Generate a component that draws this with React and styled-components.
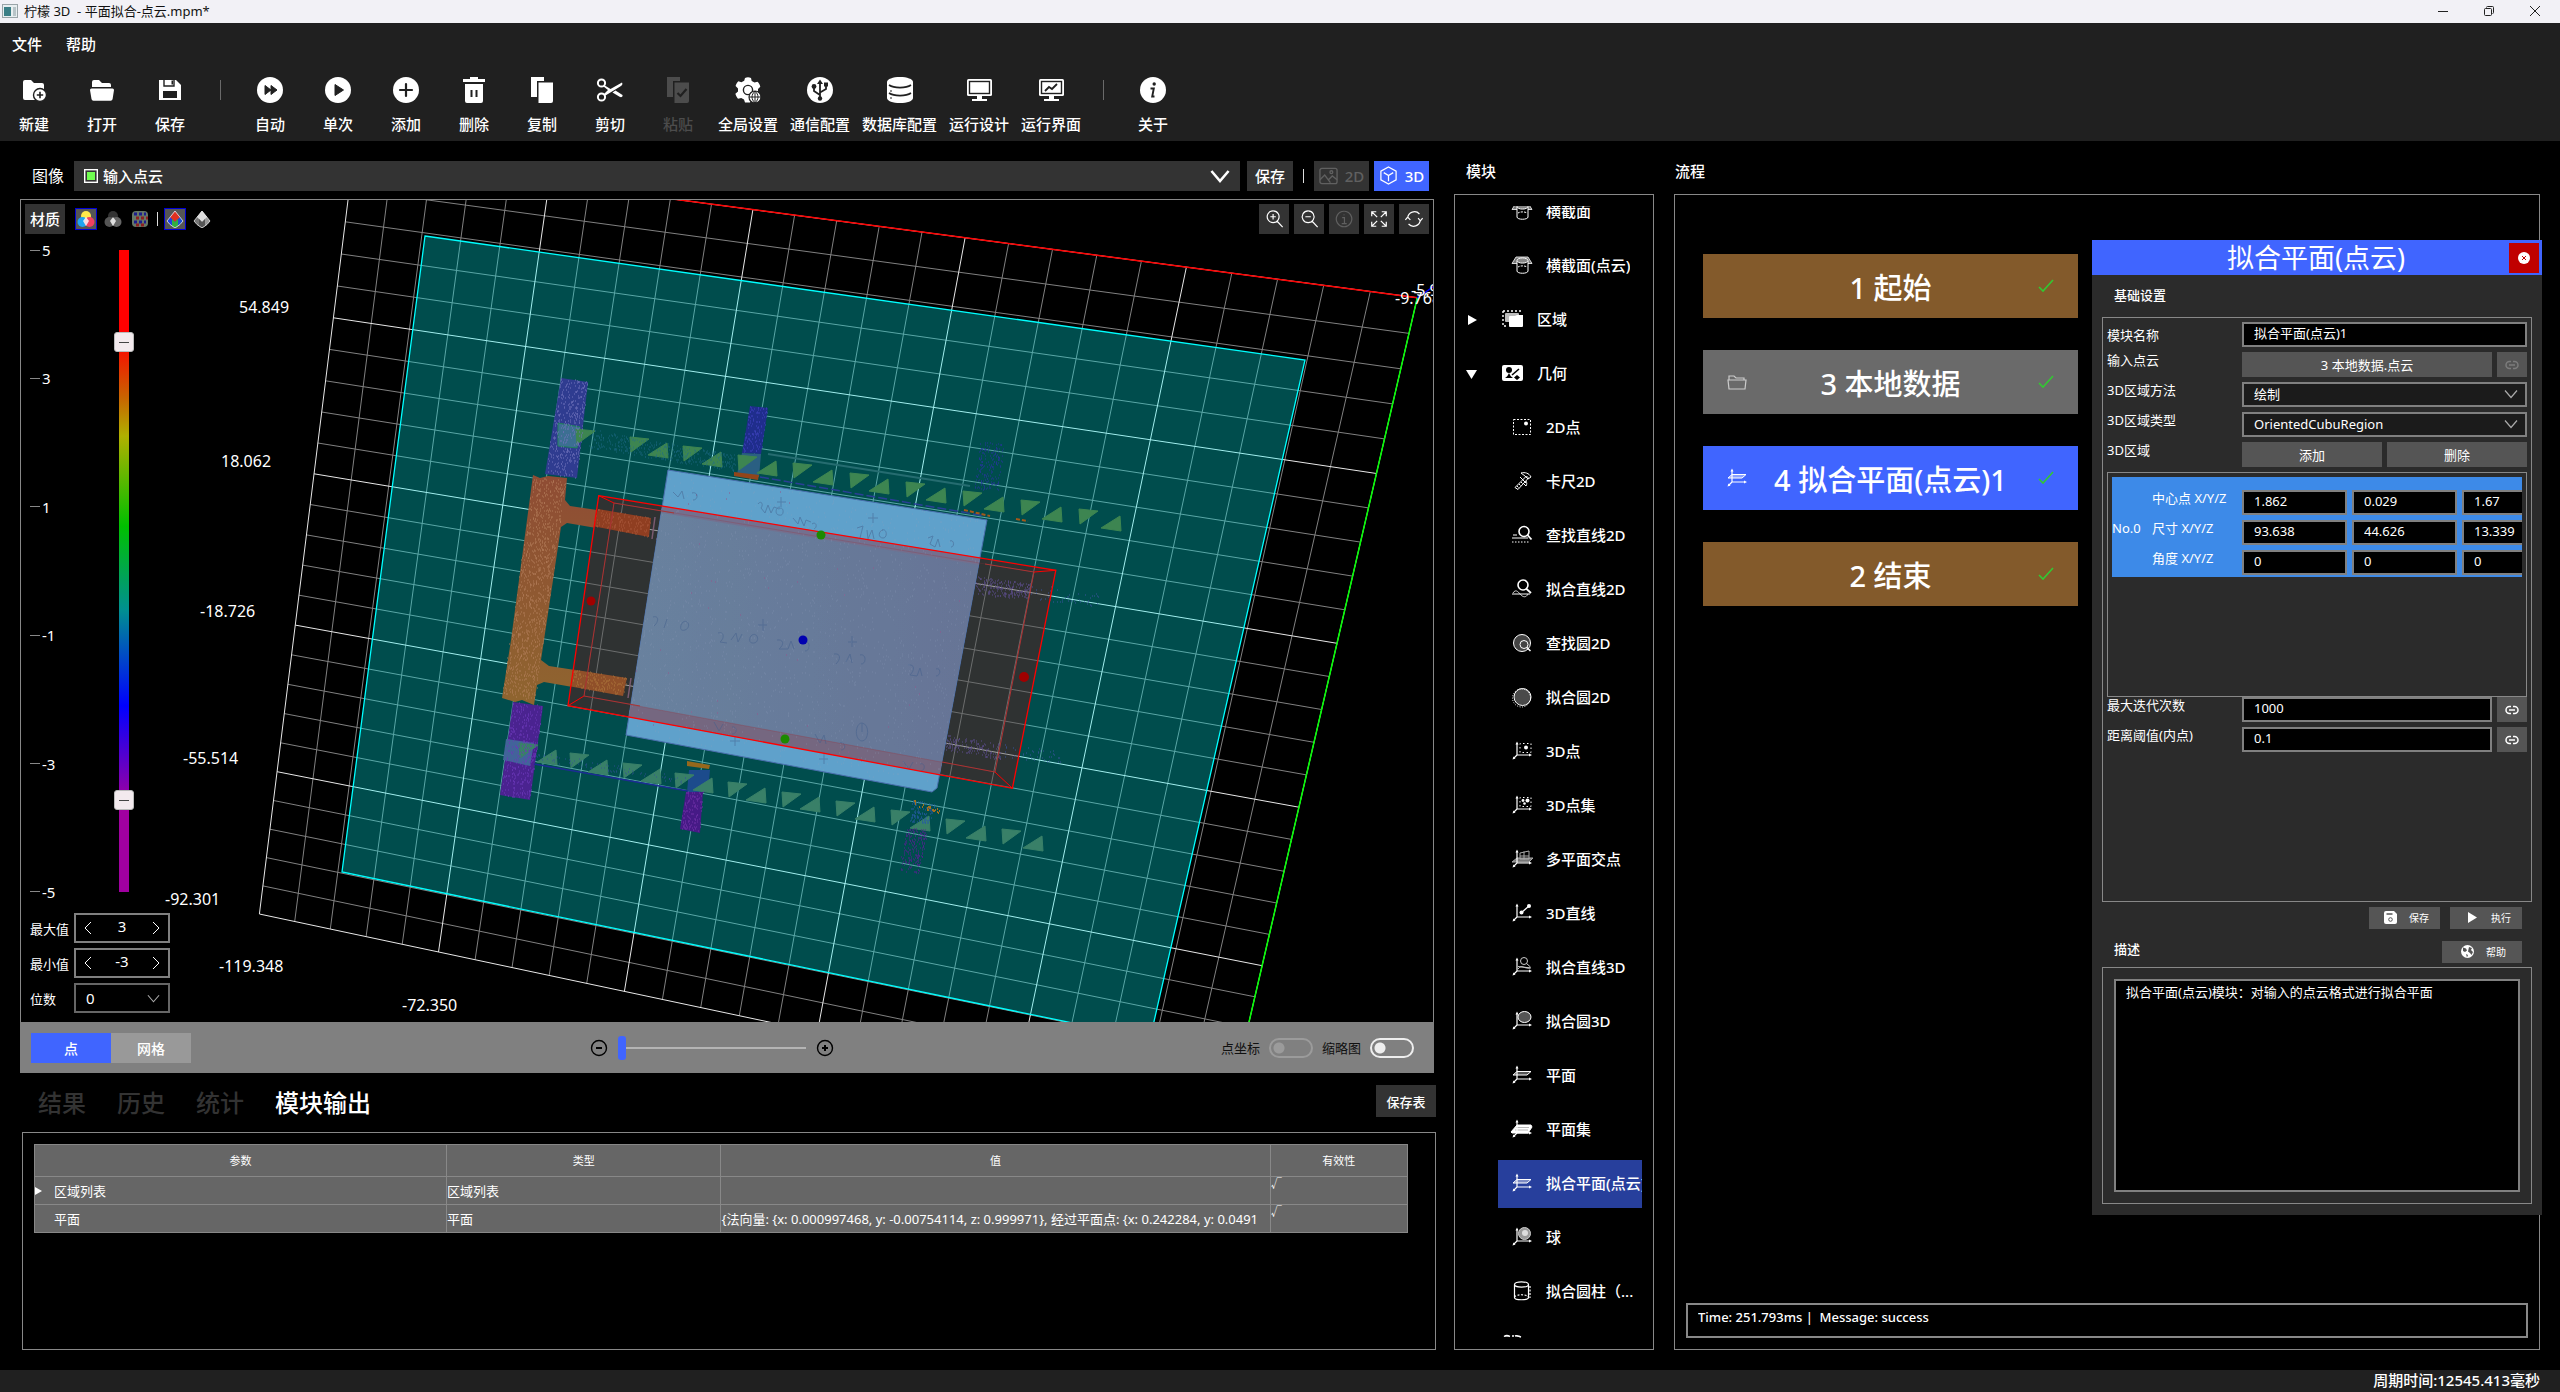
import { useLayoutEffect, useRef } from "react";
import styled, { createGlobalStyle, css } from "styled-components";

const GlobalStyle = createGlobalStyle`
  * {
    box-sizing: border-box;
  }
  body {
    margin: 0;
    background: #000;
    color: #fff;
    font-family: "Noto Sans", "Noto Sans CJK SC", sans-serif;
    font-size: 15px;
  }
  button, input, select, textarea {
    font: inherit;
    color: inherit;
    margin: 0;
    padding: 0;
    border: 0;
    border-radius: 0;
    outline: none;
  }
  svg {
    display: block;
    flex-shrink: 0;
  }
`;

/* ---------- toolbar icons ---------- */

const DARK = "#202020";

const toolbarIcons = {
  create: (
    <>
      <path d="M2 5a2 2 0 0 1 2-2h6l3 3h8a2 2 0 0 1 2 2v15H4a2 2 0 0 1-2-2z" fill="#fff" />
      <circle cx="19" cy="18" r="6.5" fill="#fff" stroke={DARK} strokeWidth="1.4" />
      <path d="M19 14.8v6.4M15.8 18h6.4" stroke={DARK} strokeWidth="1.6" />
    </>
  ),
  open: (
    <>
      <path d="M3 10V5a2 2 0 0 1 2-2h5l3 3h7a2 2 0 0 1 2 2v2z" fill="#fff" />
      <path d="M1 13a1.5 1.5 0 0 1 1.5-1.5h21A1.5 1.5 0 0 1 25 13l-1.4 9a2 2 0 0 1-2 1.7H4.500a2 2 0 0 1-2-1.700z" fill="#fff" />
    </>
  ),
  save: (
    <>
      <path d="M2 3h17l5 5v15H2z" fill="#fff" />
      <path d="M7 3v6h10V3" fill="none" stroke={DARK} strokeWidth="1.4" />
      <path d="M14.500 3.500h1.500v4h-1.500zM6 14h14v7H6z" fill={DARK} />
    </>
  ),
  auto: (
    <>
      <circle cx="13" cy="13" r="13" fill="#fff" />
      <path d="M8 8.500l6 4.500-6 4.500zM14 8.500l6 4.500-6 4.500z" fill={DARK} stroke={DARK} strokeLinejoin="round" />
    </>
  ),
  once: (
    <>
      <circle cx="13" cy="13" r="13" fill="#fff" />
      <path d="M10 7.500l8.500 5.500-8.500 5.500z" fill={DARK} stroke={DARK} strokeLinejoin="round" />
    </>
  ),
  add: (
    <>
      <circle cx="13" cy="13" r="13" fill="#fff" />
      <path d="M13 7v12M7 13h12" stroke={DARK} strokeWidth="2.2" strokeLinecap="round" />
    </>
  ),
  remove: (
    <>
      <path d="M2 2h7V0h8v2h7v3H2zM4 7h18v17a2 2 0 0 1-2 2H6a2 2 0 0 1-2-2z" fill="#fff" />
      <path d="M10.500 13v7M15.500 13v7" stroke={DARK} strokeWidth="2" />
    </>
  ),
  copy: (
    <>
      <path d="M2 0h13v4H8v16H2z" fill="#fff" />
      <path d="M9.500 5.500H24V24a2 2 0 0 1-2 2H9.500z" fill="#fff" />
    </>
  ),
  cut: (
    <>
      <circle cx="4.500" cy="6" r="3.600" fill="none" stroke="#fff" strokeWidth="2" />
      <circle cx="4.500" cy="20" r="3.600" fill="none" stroke="#fff" strokeWidth="2" />
      <path d="M7 8l6.500 4L25 5.500c.8 1.500.3 2.600-1 3.500L8.500 18.500 7 17l4-4-4.500-3.500z" fill="#fff" />
      <path d="M15.500 15.500l3-2 7 4.500c.5 1.500-.8 2.500-2.500 2z" fill="#fff" />
    </>
  ),
  paste: (
    <>
      <path d="M2 0h13v4H8v16H2z" fill="#4c4c4c" />
      <path d="M9.500 5.500H24V24a2 2 0 0 1-2 2H9.500z" fill="#4c4c4c" />
      <path d="M12.500 16l3 3 6-7" fill="none" stroke={DARK} strokeWidth="2.200" />
    </>
  ),
  settings: (
    <>
      <path
        d="M10 1c2-1 4-1 6 0l.7 3 2.800 1.600 3-.8c1.400 1.400 2.400 3 2.800 5L23 12v3l2 2-3 5-3-.5L16 23.500l-1 2h-5l-1-3-2.800-1.600-3.200.8c-1.300-1.500-2.200-3.200-2.600-5L3 14.500v-3L.6 9C1 7.200 2 5.700 3.400 4.300l3 .9L9.200 3.700z"
        fill="#fff"
      />
      <circle cx="13" cy="13" r="4.600" fill="#fff" stroke={DARK} strokeWidth="1.400" />
      <circle cx="20" cy="20" r="6" fill="#fff" stroke={DARK} strokeWidth="1.200" />
      <path d="M14 20h12M20 14v12M20 14c-4 4-4 8 0 12c4-4 4-8 0-12" fill="none" stroke={DARK} />
    </>
  ),
  comm: (
    <>
      <circle cx="13" cy="13" r="13" fill="#fff" />
      <path d="M13 5v16M13 18l-6-4v-4M13 15.500l6-3.500V8" fill="none" stroke={DARK} strokeWidth="1.800" />
      <path d="M13 2.500l3 4.500h-6zM17 5.500h4v4h-4z" fill={DARK} />
      <circle cx="7" cy="9.500" r="2.400" fill={DARK} />
      <circle cx="13" cy="21.500" r="2.200" fill={DARK} />
    </>
  ),
  database: (
    <>
      <path d="M0 5c0-3 6-5 13-5s13 2 13 5v16c0 3-6 5-13 5S0 24 0 21z" fill="#fff" />
      <path d="M2 8c5 3.500 17 3.500 22 0M2 16c5 3.500 17 3.500 22 0" fill="none" stroke={DARK} strokeWidth="1.600" />
      <path d="M3 14h2M3 21h2" stroke={DARK} />
    </>
  ),
  design: (
    <>
      <rect x="1" y="2" width="25" height="17" rx="1.500" fill="#fff" />
      <rect x="3.500" y="4.500" width="20" height="12" fill="#fff" stroke={DARK} strokeWidth="1.400" />
      <path d="M11 19h5v3h5v2H6v-2h5z" fill="#fff" />
    </>
  ),
  screen: (
    <>
      <rect x="1" y="2" width="25" height="17" rx="1.500" fill="#fff" />
      <rect x="3.500" y="4.500" width="20" height="12" fill="#fff" stroke={DARK} strokeWidth="1.400" />
      <path d="M7 14l4-4 3 2 5-5" fill="none" stroke={DARK} strokeWidth="1.800" />
      <path d="M11 19h5v3h5v2H6v-2h5z" fill="#fff" />
    </>
  ),
  about: (
    <>
      <circle cx="13" cy="13" r="13" fill="#fff" />
      <circle cx="14.200" cy="7" r="1.700" fill={DARK} />
      <path d="M10.500 11.500h3.300l-1.600 8h2.300" fill="none" stroke={DARK} strokeWidth="1.900" />
    </>
  ),
};

const TOOLS = [
  ["create", "新建"],
  ["open", "打开"],
  ["save", "保存"],
  null,
  ["auto", "自动"],
  ["once", "单次"],
  ["add", "添加"],
  ["remove", "删除"],
  ["copy", "复制"],
  ["cut", "剪切"],
  ["paste", "粘贴"],
  ["settings", "全局设置"],
  ["comm", "通信配置"],
  ["database", "数据库配置"],
  ["design", "运行设计"],
  ["screen", "运行界面"],
  null,
  ["about", "关于"],
];

/* ---------- module icons ---------- */

const Axes = () => (
  <g stroke="#fff" fill="#fff">
    <path d="M5 2.500V14H18M5 14l-3.500 3.500" fill="none" strokeWidth="1.200" />
    <path d="M5 .5l1.500 3h-3zM20 14l-3 1.500v-3zM.5 18.500l1-3 2 2z" stroke="none" />
  </g>
);

const moduleIcons = {
  section: (
    <g fill="none" stroke="#fff">
      <path d="M0 8.500L4 2h12l4 6.500z" fill="#777" strokeWidth=".8" />
      <path d="M5 6v10c0 3 11 3 11 0V6" fill="#000" />
      <ellipse cx="10.500" cy="5.500" rx="5.500" ry="2.600" fill="#888" />
      <path d="M6 12c2-1.500 7-1.500 9 0" strokeDasharray="2 1" />
    </g>
  ),
  region: (
    <g>
      <path d="M1 2h18M1 2v15h5" fill="none" stroke="#fff" strokeWidth="1.400" strokeDasharray="2 2" />
      <rect x="3" y="4" width="14" height="9" rx="1" fill="#bbb" />
      <path d="M7 8a1 1 0 0 1 1-1h5l2-1h6v11a1 1 0 0 1-1 1H8a1 1 0 0 1-1-1z" fill="#fff" />
    </g>
  ),
  geometry: (
    <g>
      <rect x="0" y="2" width="21" height="16" rx="2" fill="#fff" />
      <circle cx="7" cy="7" r="3" fill="#000" />
      <path d="M3 15c2-1 3-3 4-5 1 2 2 4 4 5zM15 12l3 2.500-3 2.500-3-2.500z" fill="#000" />
      <path d="M10 12l7-6" stroke="#000" strokeWidth="1.600" />
    </g>
  ),
  point2d: (
    <g>
      <rect x="1.500" y="2.500" width="17" height="15" fill="none" stroke="#fff" strokeDasharray="2 1.500" />
      <circle cx="14" cy="6.500" r="2" fill="#fff" />
    </g>
  ),
  caliper: (
    <g fill="none" stroke="#fff">
      <path d="M3 16.500L14.500 5l2 2L6 18.500zM9 2c4-1 8 0 10 4l-3 2-3-3zM8 6l6 6M11 12l3 3c1-2 1-3 0-5" />
      <path d="M5 15l1.500 1.500M7 13l1.500 1.500M9 11l1.500 1.500" />
    </g>
  ),
  findLine: (
    <g fill="none" stroke="#fff">
      <circle cx="12" cy="6.500" r="5" strokeWidth="1.600" />
      <path d="M15.500 10l4 4.500" strokeWidth="1.800" />
      <path d="M1 10h4M0 13h16" />
      <path d="M0 17h17" strokeDasharray="1.500 1.500" />
    </g>
  ),
  fitLine: (
    <g fill="none" stroke="#fff">
      <circle cx="11" cy="6" r="5" strokeWidth="1.600" />
      <path d="M14 9.500l5 4.500" strokeWidth="1.800" />
      <path d="M0 15h18" />
      <path d="M1 14c3-5 6 0 8 2s5 3 7-1" strokeWidth=".8" />
    </g>
  ),
  findCircle: (
    <g fill="none" stroke="#fff">
      <circle cx="10" cy="10" r="8.500" fill="#444" />
      <circle cx="12" cy="11.500" r="4" />
      <path d="M15 14.500l3.500 3.500" strokeWidth="1.500" />
    </g>
  ),
  fitCircle: (
    <g fill="none" stroke="#fff">
      <circle cx="10.500" cy="10" r="8.500" fill="#4a4a4a" />
      <circle cx="9.500" cy="11" r="9" strokeDasharray="1 1.500" />
    </g>
  ),
  point3d: (
    <g>
      <Axes />
      <path d="M8 11.500V2.500h11v9z" fill="none" stroke="#fff" strokeDasharray="1.500 2.500" />
      <circle cx="14" cy="6.500" r="2" fill="#fff" />
    </g>
  ),
  points3d: (
    <g>
      <Axes />
      <path d="M8 11.500V2.500h11v9z" fill="none" stroke="#fff" strokeDasharray="1.500 2.500" />
      <circle cx="11" cy="5.500" r="1.400" fill="#fff" />
      <circle cx="15.500" cy="5.500" r="2" fill="#fff" />
      <circle cx="12.500" cy="8.500" r="1.300" fill="#fff" />
    </g>
  ),
  planes: (
    <g>
      <path d="M0 13l5-4h16l-4 4z" fill="#777" stroke="#aaa" />
      <path d="M8 4l9-2v8H8zM8 7h9M12 2.500v8" fill="none" stroke="#aaa" />
      <Axes />
    </g>
  ),
  line3d: (
    <g>
      <Axes />
      <path d="M9 10l8-7" stroke="#fff" strokeWidth="1.300" />
      <circle cx="9.500" cy="9.500" r="2" fill="#fff" />
      <circle cx="17" cy="3" r="2" fill="#fff" />
    </g>
  ),
  fitLine3d: (
    <g>
      <Axes />
      <g fill="none" stroke="#ccc">
        <circle cx="12" cy="4" r="3.500" />
        <path d="M14.500 6.500l4 3.500M6 9.500l13 1.500M6 12c4-5 6 0 12-1" />
      </g>
    </g>
  ),
  fitCircle3d: (
    <g>
      <Axes />
      <ellipse cx="12.500" cy="6" rx="6.500" ry="5.500" fill="#555" stroke="#fff" />
    </g>
  ),
  plane: (
    <g>
      <path d="M1 10l4-3.500h14l-4 3.500z" fill="#555" stroke="#fff" />
      <Axes />
    </g>
  ),
  fitPlane: (
    <g>
      <path d="M1 10l4-3.500h14l-4 3.500z" fill="#fff" fillOpacity=".4" stroke="#fff" />
      <Axes />
    </g>
  ),
  planeSet: (
    <g>
      <path d="M-1 13l6-7h14l1 2-4 6H0z" fill="#fff" stroke="#fff" />
      <path d="M4 8.500h13M3 11h13" stroke="#888" strokeWidth=".6" />
      <Axes />
    </g>
  ),
  sphere: (
    <g>
      <Axes />
      <circle cx="12.500" cy="6.500" r="6" fill="#999" stroke="#ccc" />
      <circle cx="13" cy="6" r="3" fill="#ddd" />
    </g>
  ),
  cylinder: (
    <g fill="none" stroke="#fff" strokeWidth="1.200">
      <ellipse cx="9.500" cy="3.500" rx="7" ry="2.600" />
      <path d="M2.500 3.500v13c0 3 14 3 14 0v-13" />
      <path d="M2.500 16c2-3 12-3 14 0M18 5v12" strokeDasharray="2 1.500" />
    </g>
  ),
  more: <path d="M2 1.500c3-2 4-1 6 0M10 1h2M13 1c2-1 3 0 6 1M5 4h11v12H5z" fill="#fff" stroke="#fff" strokeWidth="1.500" />,
};

const MODULES = [
  { icon: "section", name: "横截面" },
  { icon: "section", name: "横截面(点云)" },
  { icon: "region", name: "区域", group: "closed" },
  { icon: "geometry", name: "几何", group: "open" },
  { icon: "point2d", name: "2D点" },
  { icon: "caliper", name: "卡尺2D" },
  { icon: "findLine", name: "查找直线2D" },
  { icon: "fitLine", name: "拟合直线2D" },
  { icon: "findCircle", name: "查找圆2D" },
  { icon: "fitCircle", name: "拟合圆2D" },
  { icon: "point3d", name: "3D点" },
  { icon: "points3d", name: "3D点集" },
  { icon: "planes", name: "多平面交点" },
  { icon: "line3d", name: "3D直线" },
  { icon: "fitLine3d", name: "拟合直线3D" },
  { icon: "fitCircle3d", name: "拟合圆3D" },
  { icon: "plane", name: "平面" },
  { icon: "planeSet", name: "平面集" },
  { icon: "fitPlane", name: "拟合平面(点云)", active: true },
  { icon: "sphere", name: "球" },
  { icon: "cylinder", name: "拟合圆柱（..." },
  { icon: "more", name: "", group: "last" },
];

/* ---------- point cloud scene ---------- */

// corners of the 25 x 25 ground grid on screen
const CORNERS = [
  [259.4, 914],
  [1226.5, 1119],
  [1417.3, 297.7],
  [353.4, 156.7],
];
const CELLS = 25;

function project(u, v) {
  const [p0, p1, p2, p3] = CORNERS;
  const sx = p0[0] - p1[0] + p2[0] - p3[0];
  const sy = p0[1] - p1[1] + p2[1] - p3[1];
  const dx1 = p1[0] - p2[0];
  const dy1 = p1[1] - p2[1];
  const dx2 = p3[0] - p2[0];
  const dy2 = p3[1] - p2[1];
  const den = dx1 * dy2 - dx2 * dy1;
  const g = (sx * dy2 - dx2 * sy) / den;
  const h = (dx1 * sy - sx * dy1) / den;
  const w = g * u + h * v + 1;
  const x = ((p1[0] - p0[0] + g * p1[0]) * u + (p3[0] - p0[0] + h * p3[0]) * v + p0[0]) / w;
  const y = ((p1[1] - p0[1] + g * p1[1]) * u + (p3[1] - p0[1] + h * p3[1]) * v + p0[1]) / w;
  return `${x.toFixed(1)} ${y.toFixed(1)}`;
}

function gridPath(major) {
  let d = "";
  for (let i = 0; i <= CELLS; i++) {
    if ((i % 5 === 0) !== major) continue;
    const t = i / CELLS;
    d += `M${project(t, 0)}L${project(t, 1)}M${project(0, t)}L${project(1, t)}`;
  }
  return d;
}

const MINOR = gridPath(false);
const MAJOR = gridPath(true);

// random specks inside a quad given as tl, tr, br, bl
function specks(quad, count, seed) {
  let s = seed;
  const rnd = () => {
    s = (s * 16807) % 2147483647;
    return s / 2147483647;
  };
  let d = "";
  for (let i = 0; i < count; i++) {
    const u = rnd();
    const v = rnd();
    const x = (quad[0] * (1 - u) + quad[2] * u) * (1 - v) + (quad[6] * (1 - u) + quad[4] * u) * v;
    const y = (quad[1] * (1 - u) + quad[3] * u) * (1 - v) + (quad[7] * (1 - u) + quad[5] * u) * v;
    d += `M${x.toFixed(0)} ${y.toFixed(0)}h1`;
  }
  return d;
}

const down = (points) => points.map(([x, y]) => `M${x} ${y}l19 2l-18 13z`).join("");
const up = (points) => points.map(([x, y]) => `M${x} ${y}l1 15l-20 -3z`).join("");

const TOP_DOWN = [[576, 429], [630, 437], [683, 446], [738, 455], [793, 463], [850, 473], [906, 482], [963, 491], [1021, 500], [1079, 509]];
const TOP_UP = [[667, 443], [721, 452], [776, 461], [832, 470], [888, 479], [945, 488], [1003, 497], [1061, 507], [1120, 516]];
const LOW_DOWN = [[519, 743], [570, 753], [623, 763], [675, 773], [728, 782], [782, 792], [836, 801], [891, 810], [946, 819], [1002, 829]];
const LOW_UP = [[556, 750], [607, 760], [660, 769], [712, 778], [765, 788], [819, 797], [874, 807], [929, 816], [985, 826], [1042, 836]];

const LABELS = [
  [239, 313, "54.849"],
  [221, 467, "18.062"],
  [200, 617, "-18.726"],
  [183, 764, "-55.514"],
  [165, 905, "-92.301"],
  [219, 972, "-119.348"],
  [402, 1011, "-72.350"],
  [1395, 304, "-9.768"],
  [1411, 296, "-5.98"],
];

const BOARD = "668,470 987,520 937,788 932,792 626,735";
const BOX = "598.7,495.7 1055.8,570.3 1012.4,788.3 568,705.7";

function Scene() {
  return (
    <SceneSvg viewBox="21 200 1412 822" preserveAspectRatio="xMinYMin slice" aria-hidden="true">
      <defs>
        <clipPath id="box">
          <polygon points={BOX} />
        </clipPath>
        <clipPath id="board">
          <polygon points={BOARD} />
        </clipPath>
        <linearGradient id="copper" x1="0" y1="0" x2="0" y2="1">
          <stop offset="0" stopColor="#8f4c34" />
          <stop offset="1" stopColor="#8f652f" />
        </linearGradient>
        <linearGradient id="steel" x1="0" y1="0" x2="1" y2="0">
          <stop offset="0" stopColor="#6a84a0" />
          <stop offset="1" stopColor="#667294" />
        </linearGradient>
      </defs>
      <path d={MINOR} stroke="#808080" fill="none" />
      <path d={MAJOR} stroke="#e8e8e8" fill="none" />
      <path d="M353.400 156.700L1417.300 297.700" stroke="#f00" strokeWidth="1.500" />
      <path d="M1417.300 297.700L1226.500 1119" stroke="#0f0" strokeWidth="1.500" />
      <path d="M1417 298l20-14" stroke="#00f" strokeWidth="1.500" />

      <polygon points="425,236 1305,360 1150,1039 342,872" fill="rgba(0,255,255,.3)" stroke="#0ff" strokeWidth="1.300" />

      <polygon points="561,378 588,382 577,478 545,474" fill="#2f3c90" />
      <polygon points="558,423 580,427 577,448 558,446" fill="#3c6f92" stroke="#20805c" />
      <polygon points="750,406 768,408 761,454 742,453" fill="#1f2d8c" />
      <polygon points="742,453 761,454 759,477 737,474" fill="#2a5f82" />
      <polygon points="734,472 759,475 758,480 734,476" fill="#92451a" />
      <polygon points="513,702 543,706 530,800 500,795" fill="#4a2390" />
      <polygon points="506,739 534,743 530,766 503,760" fill="#42639a" />
      <polygon points="689,770 710,770 708,792 687,792" fill="#1c4b8c" />
      <polygon points="687,761 710,765 709,769 687,766" fill="#96681c" />
      <polygon points="686,792 703,792 700,833 680,829" fill="#461a86" />
      <path d="M534 764L688 791" stroke="#1c2c94" strokeWidth="1.500" />
      <path d="M760 477L985 516" stroke="#2a3f96" strokeDasharray="9 3" strokeWidth="1.500" />
      <path d="M768 454L970 486" stroke="#256c70" strokeWidth="2" />
      <path d="M964 510l26 6M1016 519l12 2" stroke="#a3591a" strokeWidth="2" strokeDasharray="4 2" />
      <path d={down(TOP_DOWN) + up(TOP_UP)} fill="#3d8551" stroke="#3d8551" strokeLinejoin="round" />
      <path d={down(LOW_DOWN) + up(LOW_UP)} fill="#398068" stroke="#398068" strokeLinejoin="round" />
      <path d={specks([561, 378, 588, 382, 577, 478, 545, 474], 380, 11)} stroke="#7173bb" />
      <path d={specks([750, 406, 768, 408, 761, 454, 742, 453], 130, 17)} stroke="#3f42bd" />
      <path d={specks([513, 702, 543, 706, 530, 800, 500, 795], 380, 23)} stroke="#6a38b8" />
      <path d={specks([686, 792, 703, 792, 700, 833, 680, 829], 130, 29)} stroke="#7130a8" />
      <path d={specks([592, 430, 740, 456, 734, 472, 588, 448], 420, 31)} stroke="#206d8c" opacity=".7" />
      <path d={specks([980, 442, 1004, 444, 998, 490, 974, 490], 190, 37)} stroke="#26359c" />
      <path d={specks([912, 800, 936, 805, 928, 824, 910, 822], 120, 41)} stroke="#275aa5" />
      <path d={specks([907, 828, 928, 830, 919, 874, 898, 872], 190, 43)} stroke="#5b1c96" />
      <path d={specks([914, 800, 940, 810, 940, 814, 914, 806], 30, 47)} stroke="#a4701c" strokeWidth="2" />
      <path d={specks([537, 752, 690, 778, 688, 785, 535, 760], 90, 53)} stroke="#35509c" opacity=".8" />

      <path
        d="M533 475l7 3 8-2 19 2-2 22 5 6 81 12-2 19-82-14-6 4-17 113-3 20 8 6 78 12-3 18-80-14-7 3-3 20-12-5-7 2-13-4 9-58z"
        fill="url(#copper)"
      />
      <path d={specks([533, 478, 566, 480, 535, 700, 502, 696], 1100, 59)} stroke="#b98360" opacity=".8" />

      <g clipPath="url(#box)">
        <rect x="560" y="480" width="500" height="320" fill="#2f3232" />
        <path d={MINOR} stroke="#6c6e6e" fill="none" />
        <path d={MAJOR} stroke="#a0a0a0" fill="none" />
        <polygon points="598,509 651,518 649,537 592,526" fill="#8f3f22" />
        <polygon points="570,669 627,678 623,696 568,686" fill="#90502a" />
        <path d={specks([596, 509, 651, 518, 649, 537, 592, 526], 160, 61)} stroke="#b06040" opacity=".7" />
        <path d={specks([570, 669, 627, 678, 623, 696, 568, 686], 160, 67)} stroke="#b58040" opacity=".7" />
        <path d={specks([977, 577, 1030, 584, 1030, 600, 975, 595], 230, 71)} stroke="#5d4c8c" />
        <path d={specks([947, 735, 1000, 744, 1000, 760, 945, 750], 160, 73)} stroke="#5d4c8c" />
      </g>
      <path d={specks([1030, 584, 1100, 594, 1098, 608, 1030, 600], 45, 79)} stroke="#39539c" />
      <path d={specks([1000, 744, 1060, 752, 1060, 764, 1000, 758], 40, 83)} stroke="#39539c" />
      <path d="M655 517l-3 22M660 517l5 1-3 22-6-1M631 678l-3 20M635 676l5 1-3 21-5-1" fill="none" stroke="#7a5a70" strokeWidth="1.500" />

      <polygon points={BOARD} fill="#60a2cb" stroke="#4a6fae" />
      <g clipPath="url(#board)">
        <polygon points={BOX} fill="url(#steel)" />
        <polygon points="598.7,495.7 1055.8,570.3 1034,574 614,505" fill="#74718f" />
        <polygon points="568,705.7 1012.4,788.3 995.400,772 584.500,696" fill="#766880" />
        <path d={specks([668, 470, 987, 520, 935, 791, 626, 735], 1500, 89)} stroke="#8f9dbb" opacity=".35" />
        <path d={specks([668, 470, 987, 520, 935, 791, 626, 735], 40, 97)} stroke="#93568c" />
      </g>
      {/* pencil marks on the board */}
      <g fill="none" stroke="#43608d" opacity=".5">
        <path d="M781 497v10M777 502h9M873 513v10M868 518h10M763 619v12M758 625h9M852 636v11M848 642h9M824 754v10M819 759h9M735 737v9M730 741h10" />
        <path d="M758 504c3-4 6 0 3 4l4 5 3-8 3 8 3-6 5 2c5-4 6 8 0 6-4 0-4-8 1-8" />
        <path d="M793 518l5 6 2-7 4 9 2-6 5 2M812 524c4-3 6 3 2 5" />
        <path d="M857 528l6-2-3 12M867 530l1 9 4-9 2 9M882 530c5-2 6 8 1 8s-5-7 0-8" />
        <path d="M928 538l5-2-3 8 5 3 3-8 2 8M950 541c4-2 5 6 1 6" />
        <path d="M718 633c6-2 7 5 2 9l7 1M731 640l5-7 2 9 4-8M752 635c6-3 8 7 2 8s-5-6-2-8" />
        <path d="M777 640c6-1 8 4 2 9l9 0 3-8 3 8M805 642c5-2 6 9 0 9M834 654c7-1 7 5 2 10M846 662l4-8 2 9M860 655c6-2 7 9 1 9" />
        <path d="M908 665c7-1 7 5 2 10l7 1 3-8 2 8M936 669c5-2 5 7 0 7" />
        <path d="M653 617c6-2 6 5 1 9M664 628l3-9M683 622c6-3 8 6 2 8s-5-5-2-8M673 492l5 5 4-6 2 8M692 493c6-2 7 7 1 7" />
        <path d="M862 723c8 1 7 18 0 18-8-1-7-18 0-18v9M815 734l5 9 4-8 2 9M840 743c5-2 7 7 1 7M714 722l5 9 4-7M732 727c5-1 6 7 0 7M903 761l6 8 4-7M920 764c5-2 6 6 1 7" />
      </g>

      <polygon points="614,503 1034,572 995,772 584,696" fill="none" stroke="#a02c34" strokeOpacity=".25" />
      <path d="M674 513L614 503L584 696L640 706M985 564L1034 572L995 772L942 762" fill="none" stroke="#aa3434" />
      <path d="M598.700 495.700L614 503M1055.800 570.300L1034 572M1012.400 788.300L995 772M568 705.700L584 696" stroke="#f00" />
      <polygon points={BOX} fill="none" stroke="#f00" strokeWidth="1.300" />
      <circle cx="803" cy="640" r="4.500" fill="#0000b0" />
      <circle cx="821" cy="535" r="4.500" fill="#1c8a00" />
      <circle cx="785" cy="739" r="4.500" fill="#1c8a00" />
      <circle cx="591" cy="601" r="4.500" fill="#a00000" />
      <circle cx="1024" cy="677" r="5" fill="#a00000" />
      {LABELS.map(([x, y, text]) => (
        <text key={text} x={x} y={y} fill="#fff" fontSize="16">
          {text}
        </text>
      ))}
    </SceneSvg>
  );
}

/* ---------- small shared drawings ---------- */

const Chevron = ({ size = 14, color = "#aaa", width = 1.2 }) => (
  <svg width={size} height={size} viewBox="0 0 14 14" fill="none" stroke={color} strokeWidth={width}>
    <path d="M1 3.500l6 7 6-7" />
  </svg>
);

const LinkIcon = ({ color = "#fff" }) => (
  <svg width="14" height="10" viewBox="0 0 14 10" fill="none" stroke={color} strokeWidth="1.500">
    <path d="M6 1.500H4.500a3.500 3.500 0 0 0 0 7H6M8 1.500h1.500a3.500 3.500 0 0 1 0 7H8M4 5h6" />
  </svg>
);

const Check = () => (
  <svg width="16" height="14" viewBox="0 0 16 14" fill="none" stroke="#32c832" strokeWidth="1.600">
    <path d="M1 8l4 4L15 1" />
  </svg>
);

const balls = (a, b, c) => (
  <>
    <circle cx="9" cy="6" r="5" fill={a} />
    <circle cx="5.500" cy="12" r="5" fill={b} />
    <circle cx="12.500" cy="12" r="5" fill={c} />
    <path d="M9 7l3 4-3 5-3-5z" fill="#fff" opacity=".8" />
  </>
);

const gem = (a, b, c, d) => (
  <>
    <path d="M9 1L1 11l3 3.500L9 18z" fill={b} />
    <path d="M9 1l8 10-3 3.500L9 18z" fill={c} />
    <path d="M9 1L4 7l5 5 5-5z" fill={a} />
    <path d="M6 9l3 3 3-3v7l-3 2-3-2z" fill={d} />
    <path d="M9 1L1 11l3 3.500L9 18l5-3.500 3-3.500z" fill="none" stroke="#eee" strokeWidth=".8" />
  </>
);

const colorTools = [
  { name: "彩色", active: true, art: balls("#ffe94a", "#1fa4f0", "#f04060") },
  { name: "灰色", art: balls("#333", "#555", "#666") },
  {
    name: "贴图",
    art: (
      <>
        <rect x="1" y="1" width="16" height="16" rx="4" fill="#667766" />
        <path d="M3 4h12M3 12h12" stroke="#1d1d8c" strokeWidth="3" strokeDasharray="3 2" />
        <path d="M5 8h12M5 15h8" stroke="#8c2020" strokeWidth="3" strokeDasharray="3 2" />
      </>
    ),
  },
  null,
  { name: "高度", active: true, art: gem("#e03020", "#2040e0", "#2050d0", "#30b040") },
  { name: "灰度", art: gem("#ddd", "#777", "#999", "#555") },
];

const viewTools = [
  { name: "放大", art: <path d="M10 2a6.500 6.500 0 1 0 .1 0M14.500 13.500l6 6.500M10 5.500v6M7 8.500h6" /> },
  { name: "缩小", art: <path d="M10 2a6.500 6.500 0 1 0 .1 0M14.500 13.500l6 6.500M7 8.500h6" /> },
  { name: "信息", dim: true, art: <path d="M11 2.500a8.500 8.500 0 1 0 .1 0M9 9.500h2.500V16M8.500 16h5.500M11 6v1" /> },
  { name: "全屏", art: <path d="M3 8V3h5M3 3l6 6M14 3h5v5M19 3l-6 6M3 14v5h5M3 19l6-6M19 14v5h-5M19 19l-6-6" /> },
  { name: "刷新", art: <path d="M4 10a7.500 7.500 0 0 1 13-4.500M18 12a7.500 7.500 0 0 1-13 4.500M1.500 12L4 9l3 3M15.500 10l2.500 3 2.500-3" /> },
];

/* ---------- left side ---------- */

function Viewer() {
  return (
    <ViewerBox>
      <ViewArea>
        <Scene />
        <Overlay>
          <OverlayRow>
            <FlatButton $w={40}>材质</FlatButton>
            <ColorTools>
              {colorTools.map((t, i) =>
                t ? (
                  <ColorTool key={i} $active={t.active} aria-label={t.name}>
                    <svg width="18" height="18" viewBox="0 0 18 18">{t.art}</svg>
                  </ColorTool>
                ) : (
                  <Bar key={i} />
                )
              )}
            </ColorTools>
            <ViewTools>
              {viewTools.map((t) => (
                <FlatButton key={t.name} $w={30} aria-label={t.name} disabled={t.dim}>
                  <svg width="20" height="20" viewBox="0 0 22 22" fill="none" stroke={t.dim ? "#606060" : "#fff"} strokeWidth="1.300">
                    {t.art}
                  </svg>
                </FlatButton>
              ))}
            </ViewTools>
          </OverlayRow>
          <Scale>
            <Ticks>
              {[5, 3, 1, -1, -3, -5].map((t) => (
                <Tick key={t}>{t}</Tick>
              ))}
            </Ticks>
            <HeightRange>
              <HeightBar />
              <HeightInput type="range" aria-label="上限" min="-5" max="5" step="any" defaultValue="3.567" />
              <HeightInput type="range" aria-label="下限" min="-5" max="5" step="any" defaultValue="-3.567" />
            </HeightRange>
          </Scale>
          <Limits>
            {[["max", "最大值", "3"], ["min", "最小值", "-3"]].map(([id, label, value]) => (
              <Limit key={id}>
                <label htmlFor={id}>{label}</label>
                <Stepper>
                  <button aria-label="减">
                    <svg width="8" height="12" viewBox="0 0 8 12" fill="none" stroke="#fff"><path d="M7 0L1 6l6 6" /></svg>
                  </button>
                  <input id={id} defaultValue={value} />
                  <button aria-label="加">
                    <svg width="8" height="12" viewBox="0 0 8 12" fill="none" stroke="#fff"><path d="M1 0l6 6-6 6" /></svg>
                  </button>
                </Stepper>
              </Limit>
            ))}
            <Limit>
              <label htmlFor="digits">位数</label>
              <Digits>
                <select id="digits" defaultValue="0">
                  <option>0</option>
                </select>
                <Chevron size={13} />
              </Digits>
            </Limit>
          </Limits>
        </Overlay>
      </ViewArea>
      <ViewBar>
        <Segments>
          <Segment $active>点</Segment>
          <Segment>网格</Segment>
        </Segments>
        <SizeControl>
          <svg width="18" height="18" viewBox="0 0 18 18" fill="none" stroke="#000" strokeWidth="1.400">
            <circle cx="9" cy="9" r="7.500" />
            <path d="M6 9h6" strokeWidth="2" />
          </svg>
          <SizeRange type="range" aria-label="点大小" min="1" max="20" defaultValue="1" />
          <svg width="18" height="18" viewBox="0 0 18 18" fill="none" stroke="#000" strokeWidth="1.400">
            <circle cx="9" cy="9" r="7.500" />
            <path d="M6 9h6M9 6v6" strokeWidth="2" />
          </svg>
        </SizeControl>
        <Switches>
          <label htmlFor="coords">点坐标</label>
          <Switch id="coords" type="checkbox" disabled />
          <label htmlFor="thumb">缩略图</label>
          <Switch id="thumb" type="checkbox" />
        </Switches>
      </ViewBar>
    </ViewerBox>
  );
}

function Results() {
  return (
    <ResultsBox>
      <TabRow>
        <Tab>结果</Tab>
        <Tab>历史</Tab>
        <Tab>统计</Tab>
        <Tab $active>模块输出</Tab>
        <SaveTable>保存表</SaveTable>
      </TabRow>
      <TablePanel>
        <Table>
          <colgroup>
            <col width="30%" />
            <col width="20%" />
            <col width="40%" />
            <col width="10%" />
          </colgroup>
          <thead>
            <tr>
              <th>参数</th>
              <th>类型</th>
              <th>值</th>
              <th>有效性</th>
            </tr>
          </thead>
          <tbody>
            <tr>
              <NameCell>
                <svg width="8" height="10" viewBox="0 0 8 10"><path d="M0 1l7 4-7 4z" fill="#fff" /></svg>
                <span>区域列表</span>
              </NameCell>
              <td>区域列表</td>
              <td></td>
              <ValidCell>√</ValidCell>
            </tr>
            <tr>
              <NameCell><span>平面</span></NameCell>
              <td>平面</td>
              <td>{"{法向量: {x: 0.000997468, y: -0.00754114, z: 0.999971}, 经过平面点: {x: 0.242284, y: 0.0491"}</td>
              <ValidCell>√</ValidCell>
            </tr>
          </tbody>
        </Table>
      </TablePanel>
    </ResultsBox>
  );
}

/* ---------- module list ---------- */

function ModuleList() {
  const listRef = useRef(null);

  useLayoutEffect(() => {
    listRef.current.scrollTop = 18;
  }, []);

  return (
    <Panel>
      <List ref={listRef}>
        {MODULES.map((m, i) => (
          <Item key={i}>
            <Arrow>
              {m.group === "closed" && <path d="M2 1l9 5-9 5z" />}
              {m.group === "open" && <path d="M0 2h11L5.500 11z" />}
            </Arrow>
            <ItemButton $group={m.group} $active={m.active}>
              <svg width="20" height="20" viewBox="0 0 20 20" overflow="visible">{moduleIcons[m.icon]}</svg>
              <span>{m.name}</span>
            </ItemButton>
          </Item>
        ))}
      </List>
    </Panel>
  );
}

/* ---------- flow ---------- */

const NODES = [
  { text: "1 起始", color: "#835a2b" },
  { text: "3 本地数据", color: "#6a6a6a", icon: <path d="M2 8V4h5l2 2h8v2M1 8h18l-1 9H2z" fill="none" stroke="#ccc" strokeWidth="1.200" /> },
  { text: "4 拟合平面(点云)1", color: "#4065ff", icon: moduleIcons.fitPlane },
  { text: "2 结束", color: "#835a2b" },
];

const REGION = [
  ["中心点 X/Y/Z", "1.862", "0.029", "1.67"],
  ["尺寸 X/Y/Z", "93.638", "44.626", "13.339"],
  ["角度 X/Y/Z", "0", "0", "0"],
];

function Settings() {
  return (
    <Dialog>
      <DialogHead>
        <DialogTitle>拟合平面(点云)</DialogTitle>
        <Close aria-label="关闭">
          <svg width="12" height="12" viewBox="0 0 12 12">
            <circle cx="6" cy="6" r="6" fill="#fff" />
            <path d="M4 4l4 4M8 4l-4 4" stroke="#c00000" />
          </svg>
        </Close>
      </DialogHead>
      <DialogBody>
        <Heading>基础设置</Heading>
        <Fields>
          <Field $center>
            <label htmlFor="name">模块名称</label>
            <TextInput id="name" defaultValue="拟合平面(点云)1" />
          </Field>
          <Field>
            <span>输入点云</span>
            <GreyButton>3 本地数据.点云</GreyButton>
            <GreyButton $square disabled aria-label="链接"><LinkIcon color="#7c7c7c" /></GreyButton>
          </Field>
          <Field>
            <label htmlFor="method">3D区域方法</label>
            <SelectBox>
              <select id="method"><option>绘制</option></select>
              <Chevron />
            </SelectBox>
          </Field>
          <Field>
            <label htmlFor="type">3D区域类型</label>
            <SelectBox>
              <select id="type"><option>OrientedCubuRegion</option></select>
              <Chevron />
            </SelectBox>
          </Field>
          <Field>
            <span>3D区域</span>
            <GreyButton>添加</GreyButton>
            <GreyButton>删除</GreyButton>
          </Field>
          <RegionBox>
            <RegionItem>
              <RegionNo>No.0</RegionNo>
              {REGION.map(([label, ...values]) => (
                <RegionRow key={label}>
                  <span>{label}</span>
                  {values.map((v, i) => (
                    <TextInput key={i} aria-label={label} defaultValue={v} />
                  ))}
                </RegionRow>
              ))}
            </RegionItem>
          </RegionBox>
          <LastFields>
            <Field>
              <label htmlFor="iter">最大迭代次数</label>
              <TextInput id="iter" defaultValue="1000" />
              <GreyButton $square aria-label="链接"><LinkIcon /></GreyButton>
            </Field>
            <Field>
              <label htmlFor="dist">距离阈值(内点)</label>
              <TextInput id="dist" defaultValue="0.1" />
              <GreyButton $square aria-label="链接"><LinkIcon /></GreyButton>
            </Field>
          </LastFields>
        </Fields>
        <Actions>
          <SmallButton $w={71}>
            <svg width="13" height="13" viewBox="0 0 13 13">
              <path d="M0 2a2 2 0 0 1 2-2h8l3 3v8a2 2 0 0 1-2 2H2a2 2 0 0 1-2-2z" fill="#fff" />
              <path d="M2.500 3h6" stroke="#555" strokeWidth="1.500" />
              <circle cx="6.500" cy="8.500" r="1.800" fill="none" stroke="#555" />
            </svg>
            保存
          </SmallButton>
          <SmallButton $w={72}>
            <svg width="13" height="13" viewBox="0 0 13 13"><path d="M2 1l9 5.500L2 12z" fill="#fff" /></svg>
            执行
          </SmallButton>
        </Actions>
        <DescHead>
          <Heading as="label" htmlFor="desc">描述</Heading>
          <SmallButton $w={80}>
            <svg width="13" height="13" viewBox="0 0 13 13">
              <circle cx="6.500" cy="6.500" r="6.500" fill="#fff" />
              <path d="M2 2.500l3 1 1 2-2 1.500-2-1zM8 2l3 1-1 2 2 2-1.500 3L9 8 7 6.500zM5 9l2 1-1 2.500z" fill="#555" />
            </svg>
            帮助
          </SmallButton>
        </DescHead>
        <DescBox>
          <textarea id="desc" readOnly defaultValue="拟合平面(点云)模块：对输入的点云格式进行拟合平面" />
        </DescBox>
      </DialogBody>
    </Dialog>
  );
}

export default function App() {
  return (
    <Page>
      <GlobalStyle />
      <TitleBar>
        <svg width="16" height="14" viewBox="0 0 16 14">
          <rect x=".5" y=".5" width="15" height="13" fill="#e8eef0" stroke="#9aa4a8" />
          <rect x="2" y="3" width="7" height="9" fill="#3b7f86" />
          <rect x="11" y="3" width="3" height="9" fill="#b8c4c8" />
        </svg>
        <span>柠檬 3D&nbsp; - 平面拟合-点云.mpm*</span>
        <WindowButtons>
          <button aria-label="最小化"><svg width="10" height="10" viewBox="0 0 10 10"><path d="M0 5.500h10" stroke="#222" /></svg></button>
          <button aria-label="还原">
            <svg width="10" height="10" viewBox="0 0 10 10" fill="none" stroke="#222"><rect x=".5" y="2.500" width="7" height="7" rx="1" /><path d="M2.500 1.500a1 1 0 0 1 1-1h5a1 1 0 0 1 1 1v5a1 1 0 0 1-1 1" /></svg>
          </button>
          <button aria-label="关闭窗口"><svg width="10" height="10" viewBox="0 0 10 10"><path d="M0 0l10 10M10 0L0 10" stroke="#222" /></svg></button>
        </WindowButtons>
      </TitleBar>
      <Header>
        <Menu>
          <button>文件</button>
          <button>帮助</button>
        </Menu>
        <Toolbar>
          {TOOLS.map((t, i) =>
            t ? (
              <Tool key={i} disabled={t[0] === "paste"}>
                <svg width="28" height="26" viewBox="0 0 26 26">{toolbarIcons[t[0]]}</svg>
                {t[1]}
              </Tool>
            ) : (
              <Divider key={i} />
            )
          )}
        </Toolbar>
      </Header>
      <Main>
        <Column>
          <SourceRow>
            <label htmlFor="source">图像</label>
            <SourceSelect>
              <svg width="14" height="14" viewBox="0 0 14 14">
                <rect x=".7" y=".7" width="12.600" height="12.600" fill="none" stroke="#fff" strokeWidth="1.400" />
                <rect x="3" y="3" width="8" height="8" fill="#70ff50" />
              </svg>
              <select id="source"><option>输入点云</option></select>
              <Chevron size={20} color="#fff" width={1.800} />
            </SourceSelect>
            <FlatButton $w={46}>保存</FlatButton>
            <Bar $wide />
            <FlatButton $w={55} disabled>
              <svg width="19" height="18" viewBox="0 0 20 18" fill="none" stroke="#606060" strokeWidth="1.400">
                <rect x="1" y="1" width="18" height="16" rx="2" />
                <path d="M1 13l5-5 6 8M10 13l4-4 5 4" />
                <circle cx="13" cy="5" r="1.500" />
              </svg>
              2D
            </FlatButton>
            <FlatButton $w={55} $active>
              <svg width="19" height="19" viewBox="0 0 20 20" fill="none" stroke="#fff" strokeWidth="1.300">
                <path d="M10 1l8 4.500v9L10 19l-8-4.500v-9zM5 7l5 3 5-3M10 10v6" />
              </svg>
              3D
            </FlatButton>
          </SourceRow>
          <Viewer />
          <Results />
        </Column>
        <Column>
          <PanelTitle>模块</PanelTitle>
          <ModuleList />
        </Column>
        <Column>
          <PanelTitle $flush>流程</PanelTitle>
          <Panel>
            <Flow>
              {NODES.map((n) => (
                <Node key={n.text} $color={n.color}>
                  <NodeIcon viewBox="0 0 20 20">{n.icon}</NodeIcon>
                  <span>{n.text}</span>
                  <Check />
                </Node>
              ))}
            </Flow>
            <StatusInput aria-label="状态" readOnly value="Time: 251.793ms |  Message: success" />
            <Settings />
          </Panel>
        </Column>
      </Main>
      <Footer>周期时间:12545.413毫秒</Footer>
    </Page>
  );
}

const Page = styled.div`
  min-height: 100vh;
  display: flex;
  flex-direction: column;
`;
const TitleBar = styled.div`
  height: 23px;
  display: flex;
  align-items: center;
  padding: 0 2px 2px;
  gap: 6px;
  background: #f2f1f6;
  color: #111;
  font-size: 13px;
`;
const WindowButtons = styled.div`
  display: flex;
  margin-left: auto;

  button {
    width: 46px;
    height: 21px;
    display: flex;
    align-items: center;
    justify-content: center;
    background: none;
  }
`;
const Header = styled.header`
  height: 118px;
  background: #202020;
  font-weight: 500;
`;
const Menu = styled.nav`
  display: flex;
  gap: 24px;
  padding: 10px 12px 0;

  button {
    background: none;
    line-height: 22px;
  }
`;
const Toolbar = styled.div`
  display: flex;
  margin-top: 22px;
`;
const Tool = styled.button`
  min-width: 68px;
  padding: 0 6px;
  display: flex;
  flex-direction: column;
  align-items: center;
  gap: 10px;
  background: none;
  line-height: 22px;
  white-space: nowrap;

  &:disabled {
    color: #4c4c4c;
  }
`;
const Divider = styled.i`
  width: 1px;
  height: 20px;
  margin: 3px 15px 3px 16px;
  background: #6a6a6a;
`;
const Main = styled.main`
  flex: 1;
  display: grid;
  grid-template-columns: minmax(0, 1414fr) 200px minmax(0, 866fr);
  gap: 20px;
  padding: 20px;
`;
const Column = styled.section`
  display: flex;
  flex-direction: column;
  min-width: 0;
`;
const Panel = styled.div`
  position: relative;
  flex: 1;
  display: flex;
  flex-direction: column;
  padding: 11px;
  border: 1px solid #888;
`;
const PanelTitle = styled.h2`
  margin: 0;
  height: 33px;
  padding-left: ${({ $flush }) => ($flush ? "1px" : "12px")};
  font-size: 15px;
  font-weight: 500;
  line-height: 20px;
`;

const SourceRow = styled.div`
  display: flex;
  align-items: center;
  gap: 5px;
  height: 30px;
  margin-bottom: 8px;
  padding-right: 5px;

  > label {
    width: 49px;
    padding: 0 0 2px 12px;
    font-size: 16px;
    white-space: nowrap;
  }
`;
const SourceSelect = styled.div`
  flex: 1;
  height: 30px;
  display: flex;
  align-items: center;
  gap: 5px;
  padding: 0 10px;
  margin-right: 2px;
  background: #333;

  select {
    flex: 1;
    appearance: none;
    background: transparent;
    font-weight: 500;
  }
`;
const FlatButton = styled.button`
  width: ${({ $w }) => $w}px;
  height: 30px;
  display: flex;
  align-items: center;
  justify-content: center;
  gap: 7px;
  padding-bottom: 1px;
  background: ${({ $active }) => ($active ? "#4065ff" : "#333")};
  font-weight: 500;

  &:disabled {
    color: #606060;
  }
`;
const Bar = styled.i`
  width: 1px;
  height: 14px;
  margin: 0 ${({ $wide }) => ($wide ? "5px" : "1px")};
  background: #ddd;
`;

const ViewerBox = styled.div`
  flex: 1;
  display: flex;
  flex-direction: column;
`;
const ViewArea = styled.div`
  position: relative;
  flex: 1;
  overflow: hidden;
  border: 1px solid #888;
  border-bottom: 0;
`;
const SceneSvg = styled.svg`
  position: absolute;
  inset: 0;
  width: 100%;
  height: 100%;
`;
const Overlay = styled.div`
  position: relative;
  height: 100%;
  display: flex;
  flex-direction: column;
  padding: 4px;
`;
const OverlayRow = styled.div`
  display: flex;
  align-items: center;
`;
const ColorTools = styled.div`
  display: flex;
  align-items: center;
  gap: 5px;
  margin-left: 10px;
`;
const ColorTool = styled.button`
  width: 22px;
  height: 22px;
  display: flex;
  align-items: center;
  justify-content: center;
  border: 1px solid ${({ $active }) => ($active ? "#0000d8" : "transparent")};
  background: ${({ $active }) => ($active ? "#555" : "transparent")};
`;
const ViewTools = styled.div`
  display: flex;
  gap: 5px;
  margin-left: auto;
`;
const Scale = styled.div`
  flex: 1;
  display: flex;
  margin: 6px 0 11px 5px;
`;
const Ticks = styled.div`
  width: 84px;
  display: flex;
  flex-direction: column;
  justify-content: space-between;
`;
const Tick = styled.span`
  display: flex;
  align-items: center;
  gap: 2px;
  line-height: 20px;

  &::before {
    content: "";
    width: 10px;
    height: 1px;
    background: #888;
  }
`;
const HeightRange = styled.div`
  position: relative;
  width: 20px;
`;
const HeightBar = styled.div`
  position: absolute;
  inset: 10px 5px;
  background: linear-gradient(
    #f00 0%,
    #f00 14%,
    #c86400 23%,
    #b0b000 29%,
    #00c000 43%,
    #009090 56%,
    #00f 71%,
    #a000a0 86%,
    #a000a0 100%
  );
`;
const HeightInput = styled.input`
  position: absolute;
  inset: 0;
  width: 20px;
  height: 100%;
  appearance: none;
  background: transparent;
  writing-mode: vertical-lr;
  direction: rtl;
  pointer-events: none;

  &::-webkit-slider-thumb {
    appearance: none;
    width: 20px;
    height: 20px;
    border-radius: 3px;
    border: 1px solid #bbb;
    background: linear-gradient(#444, #444) center / 10px 1px no-repeat, #f3eaee;
    pointer-events: auto;
  }
`;
const Limits = styled.div`
  display: flex;
  flex-direction: column;
  gap: 5px;
  padding: 0 0 5px 5px;
  font-size: 13px;
`;
const Limit = styled.div`
  display: flex;
  align-items: center;

  label {
    width: 44px;
  }
`;
const boxed = css`
  display: flex;
  align-items: center;
  width: 96px;
  height: 30px;
  padding: 0 8px;
  border: 2px solid #808080;
  background: #000;
  font-size: 15px;
`;
const Stepper = styled.div`
  ${boxed}

  input {
    flex: 1;
    min-width: 0;
    background: none;
    text-align: center;
    padding-bottom: 4px;
  }
  button {
    background: none;
  }
`;
const Digits = styled.div`
  ${boxed}
  border-color: #666;
  padding-left: 10px;

  select {
    flex: 1;
    appearance: none;
    background: transparent;
  }
`;
const ViewBar = styled.div`
  height: 51px;
  display: grid;
  grid-template-columns: minmax(0, 26fr) auto minmax(0, 27fr);
  align-items: center;
  padding: 0 20px 0 11px;
  background: #808080;
`;
const Segments = styled.div`
  display: flex;
`;
const Segment = styled.button`
  width: 80px;
  height: 30px;
  font-size: 14px;
  font-weight: 500;
  background: ${({ $active }) => ($active ? "#4065ff" : "#999")};
`;
const SizeControl = styled.div`
  display: flex;
  align-items: center;
  gap: 10px;
`;
const SizeRange = styled.input`
  width: 188px;
  height: 24px;
  appearance: none;
  background: linear-gradient(#b4b4b4, #b4b4b4) center / 100% 2px no-repeat;

  &::-webkit-slider-thumb {
    appearance: none;
    width: 8px;
    height: 24px;
    border-radius: 3px;
    background: #4065ff;
  }
`;
const Switches = styled.div`
  display: flex;
  align-items: center;
  justify-content: flex-end;
  gap: 9px;
  color: #111;
  font-size: 13px;
`;
const Switch = styled.input`
  appearance: none;
  width: 44px;
  height: 20px;
  border: 2px solid #eee;
  border-radius: 10px;
  background: radial-gradient(circle at 8px 8px, #eee 5px, transparent 6px);

  &:disabled {
    opacity: 0.25;
  }
`;

const ResultsBox = styled.div`
  margin: 12px -2px 0 2px;
`;
const TabRow = styled.div`
  display: flex;
  align-items: center;
  gap: 31px;
  height: 32px;
  margin-bottom: 15px;
  padding-left: 16px;
`;
const Tab = styled.button`
  background: none;
  font-size: 24px;
  line-height: 32px;
  padding-top: 4px;
  font-weight: 500;
  color: ${({ $active }) => ($active ? "#fff" : "#333")};
`;
const SaveTable = styled.button`
  width: 60px;
  height: 32px;
  margin-left: auto;
  background: #333;
  font-size: 13px;
  font-weight: 500;
`;
const TablePanel = styled.div`
  height: 218px;
  padding: 11px 27px 11px 11px;
  border: 1px solid #888;
`;
const Table = styled.table`
  width: 100%;
  table-layout: fixed;
  border-collapse: collapse;
  background: #666;
  font-size: 13px;

  th,
  td {
    height: 28px;
    padding: 0;
    border: 1px solid #888;
    text-align: left;
    white-space: nowrap;
    overflow: hidden;
    line-height: 18px;
  }
  th {
    height: 32px;
    font-size: 11px;
    font-weight: 400;
    text-align: center;
  }
`;
const NameCell = styled.td`
  svg {
    display: inline-block;
    width: 8px;
    margin-right: 11px;
  }
  span:first-child {
    margin-left: 19px;
  }
`;
const ValidCell = styled.td`
  && {
    font-size: 11px;
    line-height: 14px;
    vertical-align: top;
  }
`;

const List = styled.ul`
  height: 0;
  flex: 1 1 0;
  margin: 0;
  padding: 0;
  overflow: hidden;
  list-style: none;
`;
const Item = styled.li`
  display: flex;
  align-items: center;
  height: 48px;
  margin-bottom: 6px;
`;
const Arrow = styled.svg.attrs({ viewBox: "0 0 12 12" })`
  width: 12px;
  height: 12px;
  margin-right: 20px;
  fill: #fff;
`;
const ItemButton = styled.button`
  flex: 1;
  min-width: 0;
  height: 48px;
  display: flex;
  align-items: center;
  gap: ${({ $group }) => ($group ? "15px" : "14px")};
  padding: 0 0 2px ${({ $group }) => ($group ? "4px" : "14px")};
  background: ${({ $active }) => ($active ? "#273f9c" : "none")};
  font-weight: 500;
  text-align: left;

  span {
    padding-bottom: 1px;
    overflow: hidden;
    white-space: nowrap;
  }
`;

const Flow = styled.div`
  flex: 1;
  display: flex;
  flex-direction: column;
  gap: 32px;
  width: 375px;
  margin: 48px 0 0 17px;
`;
const Node = styled.div`
  position: relative;
  height: 64px;
  display: grid;
  grid-template-columns: 20px 1fr 20px;
  align-items: center;
  padding: 0 24px;
  background: ${({ $color }) => $color};
  font-size: 29px;
  font-weight: 500;
  text-align: center;
  white-space: nowrap;

  > :last-child {
    justify-self: end;
  }
  & + &::before {
    content: "";
    position: absolute;
    left: 186px;
    top: -32px;
    width: 3px;
    height: 32px;
    background: #a9a9a9;
  }
`;
const NodeIcon = styled.svg`
  width: 20px;
  height: 20px;
`;
const StatusInput = styled.input`
  height: 35px;
  padding: 0 10px 7px;
  border: 2px solid #888;
  background: #000;
  font-size: 13px;
  font-weight: 500;
`;

const Dialog = styled.section`
  position: absolute;
  top: 45px;
  right: -3px;
  width: 450px;
  background: #2b2b2b;
  font-size: 13px;
`;
const DialogHead = styled.header`
  display: flex;
  align-items: center;
  height: 35px;
  padding: 0 3px 0 31px;
  background: #4065ff;
`;
const DialogTitle = styled.h1`
  flex: 1;
  margin: 0;
  font-size: 27px;
  font-weight: 400;
  line-height: 35px;
  text-align: center;
`;
const Close = styled.button`
  width: 30px;
  height: 30px;
  display: flex;
  align-items: center;
  justify-content: center;
  background: #c00000;
`;
const DialogBody = styled.div`
  padding: 12px 10px 11px;
`;
const Heading = styled.h3`
  margin: 0;
  padding-left: 12px;
  font-size: 13px;
  font-weight: 500;
  line-height: 16px;
`;
const Fields = styled.div`
  display: flex;
  flex-direction: column;
  gap: 5px;
  min-height: 585px;
  margin-top: 14px;
  padding: 4px;
  border: 1px solid #888;
`;
const Field = styled.div`
  display: flex;
  gap: 5px;
  height: 25px;
  align-items: ${({ $center }) => ($center ? "center" : "flex-start")};

  > :first-child {
    width: 130px;
    line-height: 16px;
    white-space: nowrap;
  }
`;
const TextInput = styled.input`
  flex: 1;
  min-width: 0;
  height: 25px;
  padding: 0 10px 4px;
  border: 2px solid #808080;
  background: #000;
`;
const GreyButton = styled.button`
  flex: ${({ $square }) => ($square ? "0 0 30px" : "1 1 0")};
  height: 25px;
  display: flex;
  align-items: center;
  justify-content: center;
  background: #555;
`;
const SelectBox = styled.div`
  flex: 1;
  height: 25px;
  display: flex;
  align-items: center;
  padding: 0 7px 1px 10px;
  border: 2px solid #808080;
  background: #1b1b1b;

  select {
    flex: 1;
    appearance: none;
    background: transparent;
  }
`;
const RegionBox = styled.div`
  height: 225px;
  padding: 4px;
  border: 1px solid #888;
`;
const RegionItem = styled.div`
  display: grid;
  grid-template-columns: 40px 1fr;
  row-gap: 5px;
  padding: 13px 0 2px;
  background: #3d8ae8;
  overflow: hidden;
`;
const RegionNo = styled.span`
  grid-row: 1 / 4;
  align-self: center;
  padding-bottom: 10px;
  line-height: 18px;
`;
const RegionRow = styled.div`
  grid-column: 2;
  display: grid;
  grid-template-columns: 85px 105px 105px 105px;
  gap: 5px;
  line-height: 16px;
`;
const LastFields = styled.div`
  display: flex;
  flex-direction: column;
  gap: 5px;
  margin-top: -5px;
`;
const Actions = styled.div`
  display: flex;
  justify-content: flex-end;
  gap: 10px;
  padding: 5px 10px 12px;
`;
const SmallButton = styled.button`
  width: ${({ $w }) => $w}px;
  height: 22px;
  display: flex;
  align-items: center;
  justify-content: flex-end;
  gap: 12px;
  padding: 0 ${({ $w }) => ($w > 75 ? "16px" : "11px")} 1px 0;
  background: #555;
  font-size: 10px;
`;
const DescHead = styled.div`
  display: flex;
  justify-content: space-between;
  padding: 0 10px 4px 0;
`;
const DescBox = styled.div`
  padding: 11px;
  border: 1px solid #888;

  textarea {
    display: block;
    width: 100%;
    height: 213px;
    padding: 1px 10px;
    border: 2px solid #808080;
    background: #000;
    resize: none;
  }
`;
const Footer = styled.footer`
  height: 22px;
  padding-right: 20px;
  background: #202020;
  font-weight: 500;
  line-height: 21px;
  text-align: right;
`;
